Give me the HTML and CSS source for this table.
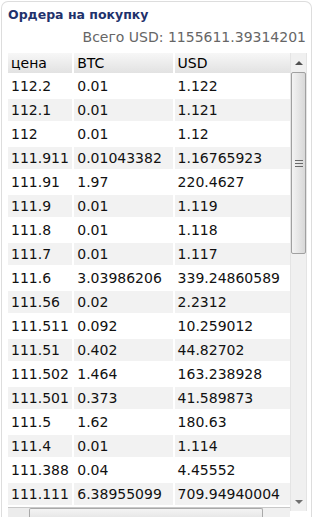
FILE: index.html
```html
<!DOCTYPE html>
<html lang="ru">
<head>
<meta charset="utf-8">
<title>Ордера на покупку</title>
<link rel="stylesheet" href="styles.css">
</head>
<body>
<div class="panel">
  <h3 class="title">Ордера на покупку</h3>
  <div class="total">Всего USD: 1155611.39314201</div>
  <div class="scroller">
    <div class="view">
      <table class="orders">
        <thead>
          <tr><th class="c1">цена</th><th class="c2">BTC</th><th class="c3">USD</th></tr>
        </thead>
        <tbody>
          <tr><td>112.2</td><td>0.01</td><td>1.122</td></tr>
          <tr><td>112.1</td><td>0.01</td><td>1.121</td></tr>
          <tr><td>112</td><td>0.01</td><td>1.12</td></tr>
          <tr><td>111.911</td><td>0.01043382</td><td>1.16765923</td></tr>
          <tr><td>111.91</td><td>1.97</td><td>220.4627</td></tr>
          <tr><td>111.9</td><td>0.01</td><td>1.119</td></tr>
          <tr><td>111.8</td><td>0.01</td><td>1.118</td></tr>
          <tr><td>111.7</td><td>0.01</td><td>1.117</td></tr>
          <tr><td>111.6</td><td>3.03986206</td><td>339.24860589</td></tr>
          <tr><td>111.56</td><td>0.02</td><td>2.2312</td></tr>
          <tr><td>111.511</td><td>0.092</td><td>10.259012</td></tr>
          <tr><td>111.51</td><td>0.402</td><td>44.82702</td></tr>
          <tr><td>111.502</td><td>1.464</td><td>163.238928</td></tr>
          <tr><td>111.501</td><td>0.373</td><td>41.589873</td></tr>
          <tr><td>111.5</td><td>1.62</td><td>180.63</td></tr>
          <tr><td>111.4</td><td>0.01</td><td>1.114</td></tr>
          <tr><td>111.388</td><td>0.04</td><td>4.45552</td></tr>
          <tr><td>111.111</td><td>6.38955099</td><td>709.94940004</td></tr>
        </tbody>
      </table>
      <div class="hscroll">
        <div class="hbtn"></div>
        <div class="hthumb"></div>
      </div>
    </div>
    <div class="vscroll">
      <div class="vbtn"><span class="tri-up"></span></div>
      <div class="vthumb"><span class="grip"></span></div>
      <div class="vtrack"></div>
      <div class="vbtn"><span class="tri-down"></span></div>
    </div>
  </div>
</div>
</body>
</html>
```

FILE: styles.css
```css
html, body {
  margin: 0;
  padding: 0;
  background: #fff;
  overflow: hidden;
}
body {
  font-family: "DejaVu Sans", Verdana, sans-serif;
  font-size: 14px;
  color: #111;
}
.panel {
  margin: 1px 0 0 1px;
  width: 311px;
  height: 540px;
  border: 1px solid #dddddd;
  border-bottom: 0;
  border-radius: 7px 7px 0 0;
  padding: 5px 4px 0 6px;
  box-sizing: border-box;
}
.title {
  margin: 0;
  font-size: 12.5px;
  line-height: 16px;
  font-weight: bold;
  color: #1f326c;
}
.total {
  margin-top: 6px;
  font-size: 14px;
  line-height: 16px;
  text-align: right;
  color: #666;
  padding-right: 1px;
}
.scroller {
  margin-top: 8px;
  display: flex;
  align-items: flex-start;
}
.view {
  width: 282px;
}
.orders {
  border-collapse: separate;
  border-spacing: 0;
  width: 283px;
  table-layout: fixed;
}
.orders th, .orders td {
  padding: 0 3px;
  border-right: 2px solid #fff;
  border-bottom: 2px solid #fff;
  text-align: left;
  white-space: nowrap;
  overflow: hidden;
}
.orders th:last-child, .orders td:last-child {
  border-right: 0;
}
.orders th {
  height: 20px;
  font-weight: normal;
  color: #000;
  background: linear-gradient(#f7f7f7, #e2e2e2);
}
.orders td {
  height: 22px;
}
.orders tbody tr:nth-child(even) td {
  background: #f2f2f2;
}
.c1 { width: 58px; }
.c2 { width: 92px; }
.c3 { width: 110px; }

.hscroll {
  display: flex;
  height: 16px;
  border-top: 1px solid #c8c8c8;
  background: #f0f0f0;
}
.hbtn {
  width: 21px;
  background: #ececec;
}
.hthumb {
  width: 232px;
  border: 1px solid #a9a9a9;
  border-bottom: 0;
  border-radius: 2px 2px 0 0;
  background: linear-gradient(#f4f4f4, #dcdcdc);
}

.vscroll {
  width: 19px;
  height: 458px;
  display: flex;
  flex-direction: column;
  background: #f0f0f0;
  border-left: 1px solid #e4e4e4;
  border-right: 1px solid #e4e4e4;
  box-sizing: border-box;
}
.vbtn {
  height: 19px;
  display: flex;
  align-items: center;
  justify-content: center;
}
.tri-up {
  width: 0;
  height: 0;
  border-left: 4px solid transparent;
  border-right: 4px solid transparent;
  border-bottom: 4px solid #505050;
}
.tri-down {
  width: 0;
  height: 0;
  border-left: 4px solid transparent;
  border-right: 4px solid transparent;
  border-top: 4px solid #707070;
}
.vthumb {
  height: 182px;
  border: 1px solid #a0a0a0;
  border-radius: 2px;
  background: linear-gradient(90deg, #f3f3f3, #d8d8d8);
  display: flex;
  align-items: center;
  justify-content: center;
  box-sizing: border-box;
}
.grip {
  width: 8px;
  height: 7px;
  background: repeating-linear-gradient(#6a6a6a 0 1px, transparent 1px 3px);
}
.vtrack {
  flex: 1;
}
```
